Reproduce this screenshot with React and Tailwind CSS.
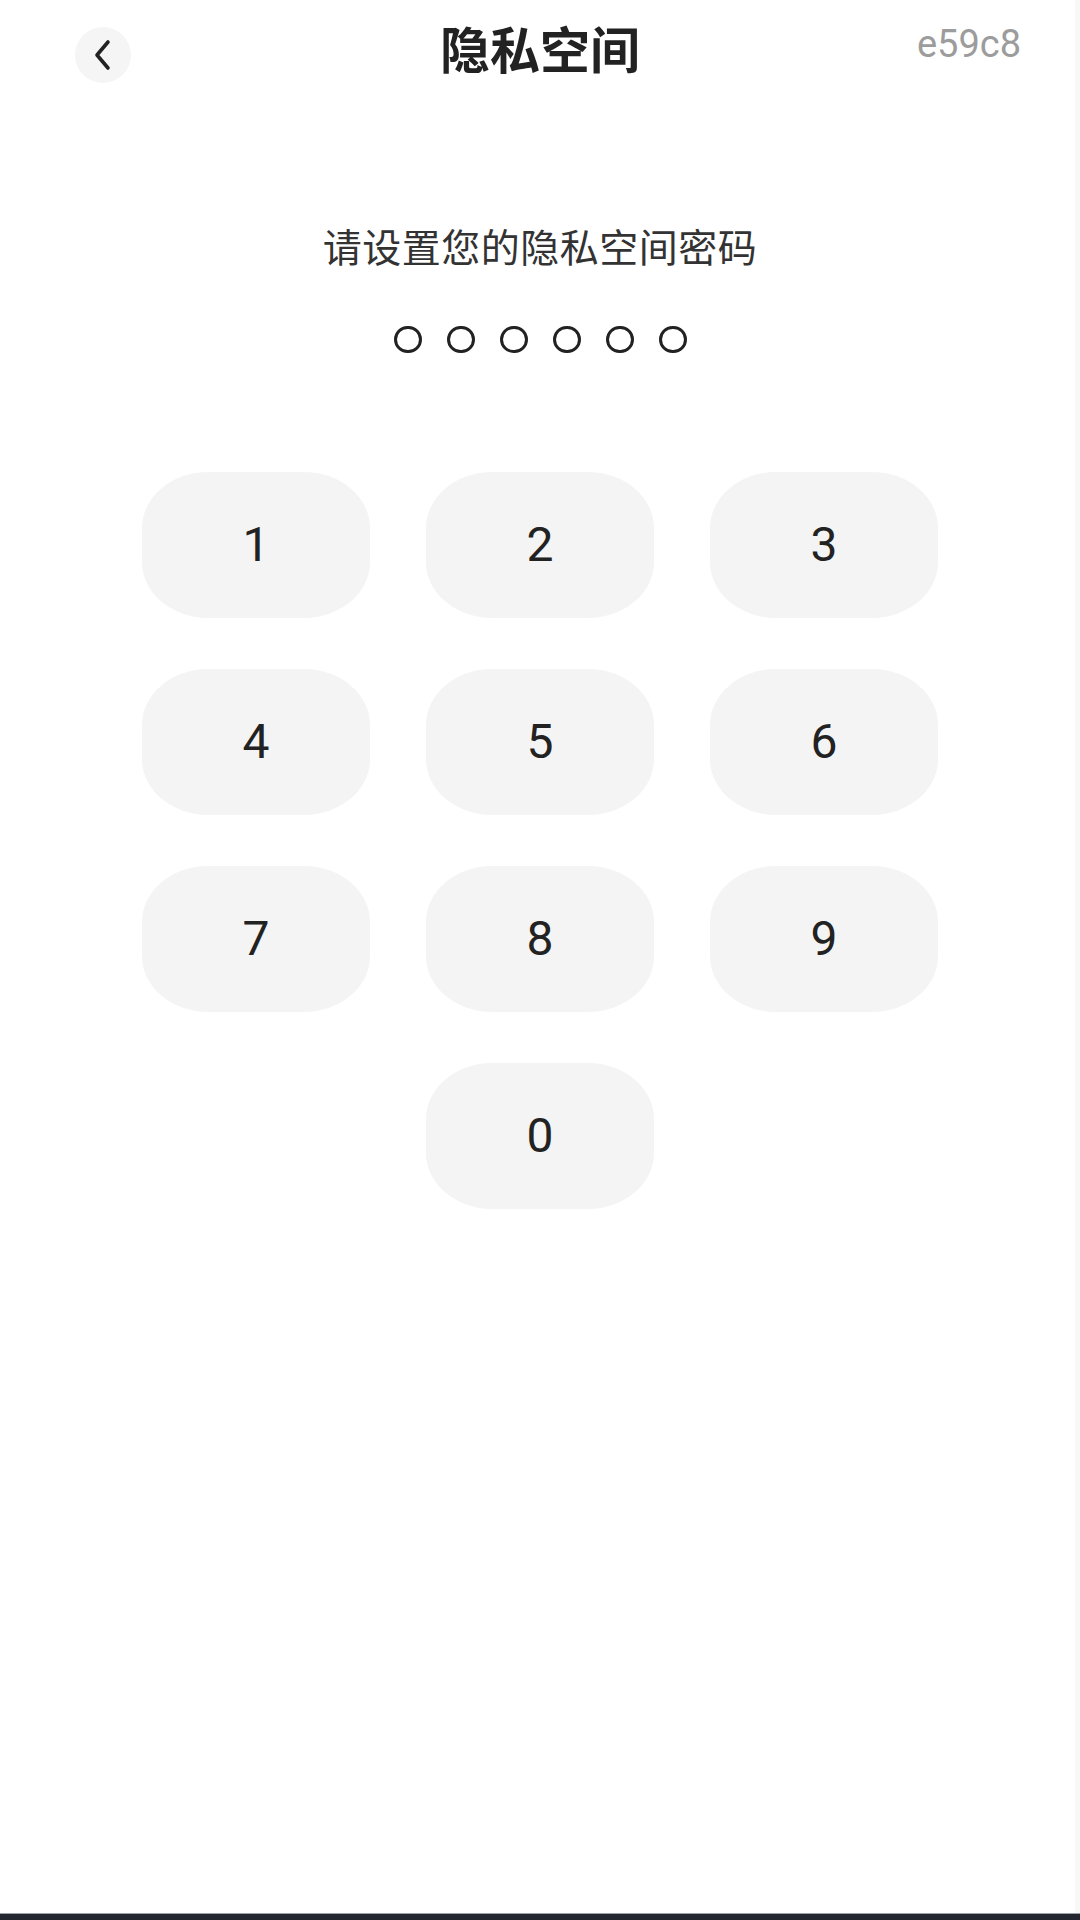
const keys = [['1', '2', '3'], ['4', '5', '6'], ['7', '8', '9']];

function Key({ n }) {
  return (
    <button className="w-[228px] h-[146px] rounded-[66px/56px] bg-[#f4f4f4] flex items-center justify-center text-[48px] leading-none text-[#222] font-['Roboto',sans-serif]">
      {n}
    </button>
  );
}

export default function App() {
  const cjk = "font-['Noto_Sans_CJK_SC','Noto_Sans',sans-serif]";

  return (
    <div className="relative w-[1080px] h-[1920px] bg-white flex flex-col">
      <header className="h-[102px] grid grid-cols-[1fr_auto_1fr] items-start">
        <div className="pl-[75px] pt-[27px]">
          <div className="w-[56px] h-[56px] rounded-full bg-[#f5f5f5] flex items-center justify-center">
            <svg width="22" height="32" viewBox="0 0 22 32" fill="none">
              <path d="M16 3 L5 16 L16 29" stroke="#222" strokeWidth="3.6" strokeLinecap="round" strokeLinejoin="round" />
            </svg>
          </div>
        </div>
        <h1 className={`pt-[21px] text-[50px] leading-[52px] font-bold text-[#222] ${cjk}`}>隐私空间</h1>
        <div className="flex justify-end pr-[59px] pt-[25px]">
          <span className="text-[38px] leading-[38px] text-[#9c9c9c] font-['Roboto',sans-serif]">e59c8</span>
        </div>
      </header>

      <main className="flex-1 flex flex-col items-center">
        <p className={`mt-[119px] text-[39px] leading-[48px] tracking-[0.5px] text-[#333] ${cjk}`}>请设置您的隐私空间密码</p>

        <div className="mt-[57px] flex gap-[25px]">
          {[0, 1, 2, 3, 4, 5].map((i) => (
            <span key={i} className="w-[28px] h-[27px] rounded-full border-[3px] border-[#222]" />
          ))}
        </div>

        <div className="mt-[119px] grid grid-cols-[228px_228px_228px] gap-x-[56px] gap-y-[51px]">
          {keys.flat().map((n) => (
            <Key key={n} n={n} />
          ))}
          <div />
          <Key n="0" />
        </div>
      </main>

      <div className="h-[7px] bg-[#22262f] border-t border-[#9aa0a8]" />
      <div className="absolute top-0 right-0 w-[5px] h-[1913px] bg-[#f8f8f8]" />
    </div>
  );
}
